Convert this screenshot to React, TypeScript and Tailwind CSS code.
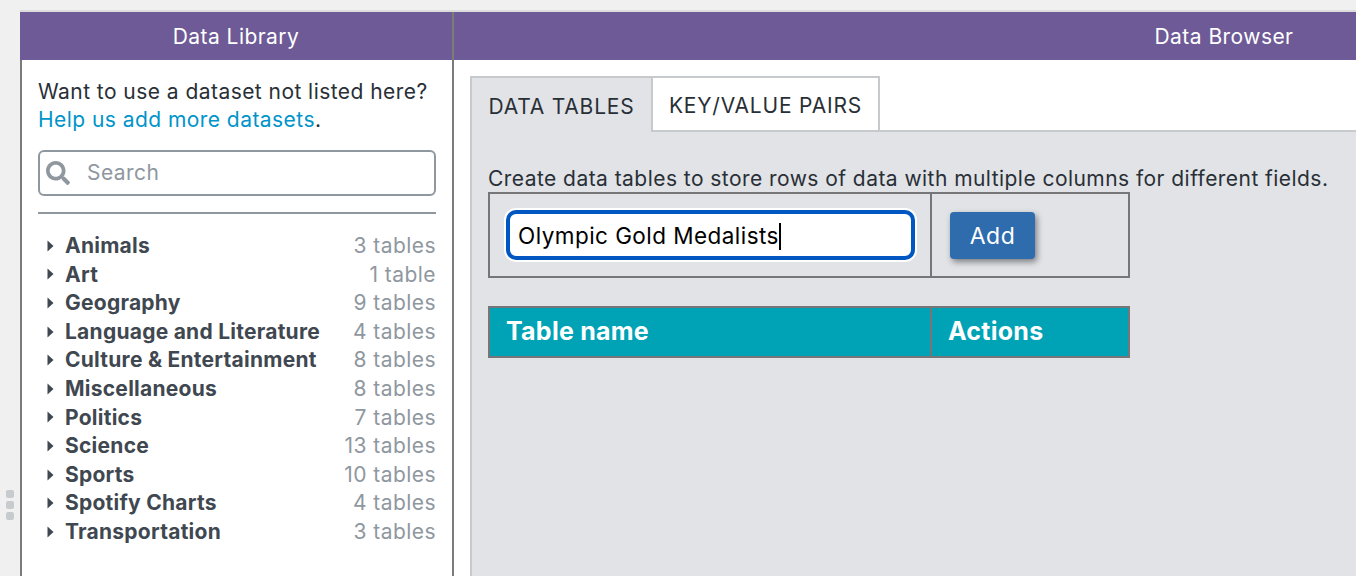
import { FaSearch } from 'react-icons/fa'

const categories = [
  { name: 'Animals', count: '3 tables' },
  { name: 'Art', count: '1 table' },
  { name: 'Geography', count: '9 tables' },
  { name: 'Language and Literature', count: '4 tables' },
  { name: 'Culture & Entertainment', count: '8 tables' },
  { name: 'Miscellaneous', count: '8 tables' },
  { name: 'Politics', count: '7 tables' },
  { name: 'Science', count: '13 tables' },
  { name: 'Sports', count: '10 tables' },
  { name: 'Spotify Charts', count: '4 tables' },
  { name: 'Transportation', count: '3 tables' },
]

function DataLibrary() {
  return (
    <aside className="flex w-[434px] shrink-0 flex-col">
      <div className="flex h-12 items-center justify-center border-r-2 border-r-[#7a7d72] bg-[#6d5a96] pt-[1px] text-[21px] text-white">Data Library</div>
      <div className="flex-1 border-x-2 border-x-[#7b7b7d] bg-white pl-[16px] pr-[16px] pt-[18px]">
        <p className="text-[21px] leading-[28px] text-[#292f36]">
          Want to use a dataset not listed here?
          <br />
          <span className="text-[#0094ca]">Help us add more datasets</span>.
        </p>
        <div className="mt-[16px] flex h-[46px] items-center rounded-[6px] border-2 border-[#8f979f] pl-[6px]">
          <FaSearch className="h-[24px] w-[24px] text-[#8f979f]" />
          <span className="ml-[17px] text-[21px] text-[#8f979f]">Search</span>
        </div>
        <div className="mt-[16px] h-[2px] bg-[#8f979f]" />
        <ul className="mt-[17.5px]">
          {categories.map((c) => (
            <li key={c.name} className="flex h-[28.6px] items-center justify-between">
              <span className="flex items-center">
                <svg width="7" height="12" viewBox="0 0 7 12" className="ml-[9px] mr-[11px]">
                  <path d="M0.5 0.5 L6.5 6 L0.5 11.5 Z" fill="#3f4850" />
                </svg>
                <span className="text-[21px] font-bold tracking-[0.25px] text-[#3f4850]">{c.name}</span>
              </span>
              <span className="text-[21px] text-[#8f979f]">{c.count}</span>
            </li>
          ))}
        </ul>
      </div>
    </aside>
  )
}

function DataBrowser() {
  return (
    <main className="flex min-w-0 flex-1 flex-col">
      <div className="flex h-12 items-center justify-center bg-[#6d5a96] pt-[1px] text-[21px] text-white">
        <span className="whitespace-nowrap">Data Browser</span>
      </div>
      <div className="flex-1 bg-white pl-[16px] pt-[16px]">
        <div className="flex h-[56px] text-[21px] tracking-[0.8px] text-[#292f36]">
          <div className="flex w-[183px] items-center justify-center border-2 border-b-0 border-[#c7cacd] bg-[#e1e3e7] pt-[4px]">DATA TABLES</div>
          <div className="flex w-[227px] items-center justify-center border-y-2 border-r-2 border-[#c7cacd] bg-white pt-[4px]">KEY/VALUE PAIRS</div>
          <div className="flex-1 self-end border-b-2 border-[#c7cacd]" />
        </div>
        <div className="h-[444px] border-l-2 border-[#c7cacd] bg-[#e1e3e7] pl-[16px] pt-[34px] text-[21px] text-[#292f36]">
          <p className="whitespace-nowrap leading-[26px]">Create data tables to store rows of data with multiple columns for different fields.</p>
          <div className="flex h-[86px] w-[642px] border-2 border-[#767678]">
            <div className="flex w-[442px] items-center border-r-2 border-[#767678] pl-[16px]">
              <div className="flex h-[50px] w-[409px] items-center rounded-[10px] border-[4px] border-[#0057c2] bg-white pl-[8px] pt-[2px] text-[22.5px] text-black shadow-[0_0_0_2px_#fff]">
                Olympic Gold Medalists<span className="h-[27px] w-[2px] bg-black" />
              </div>
            </div>
            <div className="flex flex-1 items-center pl-[18px]">
              <button className="h-[47px] w-[85px] rounded-[4px] bg-[#2e6cae] pt-[2px] text-[23px] text-white shadow-[2px_3px_6px_rgba(0,0,0,0.45)]">Add</button>
            </div>
          </div>
          <div className="mt-[28px] flex h-[52px] w-[642px] border-2 border-[#767678] bg-[#00a3b5] text-[25px] font-bold tracking-[0.25px] text-white">
            <div className="flex w-[442px] items-center border-r-2 border-[#767678] pl-[16px]">Table name</div>
            <div className="flex flex-1 items-center pl-[16px]">Actions</div>
          </div>
        </div>
      </div>
    </main>
  )
}

export default function App() {
  return (
    <div className="h-[576px] w-[1356px] overflow-hidden bg-[#f0f0f0] pl-[20px] pt-[10px] font-['Inter','Liberation_Sans',sans-serif] tracking-[0.45px]">
      <div className="relative flex h-[566px] w-[1974px] border-t-2 border-[#dcdcdc]">
        <div className="absolute -left-[14px] top-[478px] flex flex-col gap-[3px]">
          <span className="h-[8px] w-[8px] rounded-[2px] bg-[#c8cbcd]" />
          <span className="h-[8px] w-[8px] rounded-[2px] bg-[#c8cbcd]" />
          <span className="h-[8px] w-[8px] rounded-[2px] bg-[#c8cbcd]" />
        </div>
        <DataLibrary />
        <DataBrowser />
      </div>
    </div>
  )
}
